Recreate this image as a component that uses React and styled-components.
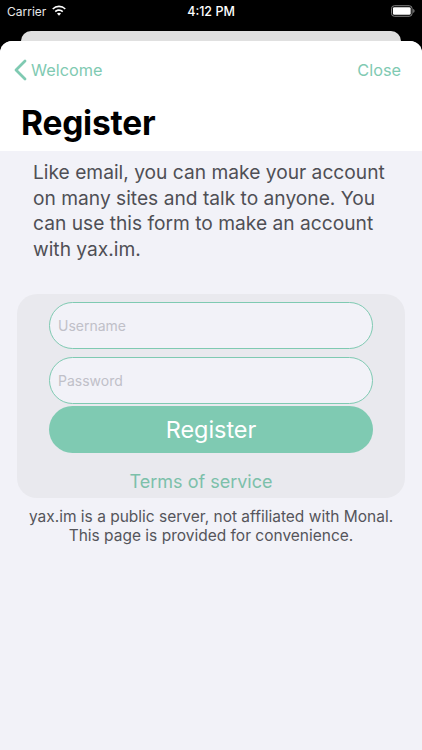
import React from 'react'
import styled, { createGlobalStyle } from 'styled-components'

const FONT = 'Inter, "Liberation Sans", sans-serif'
const MINT = '#7fcab2'

const GlobalStyle = createGlobalStyle`
    html, body {
        margin: 0;
        padding: 0;
        background: #000;
    }
    * {
        box-sizing: border-box;
    }
`

function WifiIcon() {
    return (
        <svg width="16" height="12" viewBox="0 0 16 12" fill="#fff">
            <path d="M8 2.3c2.2 0 4.2.8 5.7 2.3l1.1-1.2A9.9 9.9 0 0 0 8 .6 9.9 9.9 0 0 0 1.2 3.4l1.1 1.2A8.2 8.2 0 0 1 8 2.3z" />
            <path d="M8 5.9c1.2 0 2.3.4 3.2 1.3l1.1-1.2A6.3 6.3 0 0 0 8 4.2C6.4 4.2 4.900 4.800 3.700 6l1.100 1.200C5.700 6.300 6.800 5.900 8 5.900z" />
            <path d="M8 7.800c-.8 0-1.500.3-2 .8L8 10.800l2-2.200c-.5-.5-1.200-.8-2-.8z" />
        </svg>
    )
}

function BatteryIcon() {
    return (
        <svg width="24" height="12" viewBox="0 0 25 12">
            <rect x="0.5" y="0.5" width="21.500" height="11" rx="3" fill="none" stroke="#8a8a8a" />
            <rect x="2" y="2" width="18.500" height="8" rx="1.500" fill="#fff" />
            <path d="M23.200 4v4c.8-.3 1.300-1.100 1.300-2s-.5-1.700-1.300-2z" fill="#8a8a8a" />
        </svg>
    )
}

function App() {
    return (
        <Screen>
            <GlobalStyle />
            <StatusBar>
                <StatusLeft>Carrier <WifiIcon /></StatusLeft>
                <StatusTime>4:12 PM</StatusTime>
                <StatusRight><BatteryIcon /></StatusRight>
            </StatusBar>
            <BackSheet />
            <Sheet>
                <Header>
                    <NavBar>
                        <NavButton>
                            <svg width="14" height="22" viewBox="0 0 14 22" fill="none">
                                <path d="M12 2 3 11l9 9" stroke={MINT} strokeWidth="2.800" strokeLinecap="round" strokeLinejoin="round" />
                            </svg>
                            Welcome
                        </NavButton>
                        <NavButton>Close</NavButton>
                    </NavBar>
                    <Title>Register</Title>
                </Header>
                <Body>
                    <Intro>Like email, you can make your account on many sites and talk to anyone. You can use this form to make an account with yax.im.</Intro>
                    <FormCard>
                        <Field>Username</Field>
                        <Field>Password</Field>
                        <SubmitButton>Register</SubmitButton>
                        <TermsLink>Terms of service</TermsLink>
                    </FormCard>
                    <Note>yax.im is a public server, not affiliated with Monal.<br />This page is provided for convenience.</Note>
                </Body>
            </Sheet>
        </Screen>
    )
}

export default App

const Screen = styled.div`
    width: 422px;
    height: 750px;
    display: flex;
    flex-direction: column;
    overflow: hidden;
    background: #000;
    font-family: ${FONT};
`
const StatusBar = styled.div`
    height: 31px;
    flex-shrink: 0;
    display: grid;
    grid-template-columns: 1fr auto 1fr;
    align-items: center;
    padding: 0 7px 9px 7px;
    color: #fff;
    font-size: 12px;
`
const StatusLeft = styled.div`
    display: flex;
    align-items: center;
    gap: 5px;
    color: #e8e8e8;
`
const StatusTime = styled.div`
    font-weight: 500;
    font-size: 12.500px;
`
const StatusRight = styled.div`
    display: flex;
    justify-content: flex-end;
`
const BackSheet = styled.div`
    height: 10px;
    flex-shrink: 0;
    margin: 0 21px;
    background: #e0e0e0;
    border-radius: 10px 10px 0 0;
`
const Sheet = styled.div`
    flex: 1;
    display: flex;
    flex-direction: column;
    background: #f2f2f8;
    border-radius: 12px 12px 0 0;
    overflow: hidden;
`
const Header = styled.div`
    height: 110px;
    flex-shrink: 0;
    background: #fff;
    padding: 0 21px 0 13px;
`
const NavBar = styled.div`
    height: 58px;
    display: flex;
    justify-content: space-between;
    align-items: center;
`
const NavButton = styled.div`
    display: flex;
    align-items: center;
    gap: 4px;
    color: ${MINT};
    font-size: 16.300px;
`
const Title = styled.h1`
    margin: 0;
    padding-left: 8px;
    color: #000;
    font-size: 33.500px;
    line-height: 48px;
    font-weight: 700;
    letter-spacing: -0.200px;
`
const Body = styled.div`
    display: flex;
    flex-direction: column;
`
const Intro = styled.p`
    margin: 9px 0 0 0;
    padding: 0 30px 0 33px;
    color: #4f4f55;
    font-size: 19.200px;
    line-height: 25.500px;
`
const FormCard = styled.div`
    margin: 32px 17px 0 17px;
    height: 204px;
    display: flex;
    flex-direction: column;
    align-items: center;
    padding-top: 8px;
    background: #e9e9ee;
    border-radius: 20px;
`
const Field = styled.div`
    width: 324px;
    height: 47px;
    margin-bottom: 8px;
    display: flex;
    align-items: center;
    padding: 0 0 1px 8px;
    color: #c0c0c8;
    font-size: 14px;
    background: #f2f2f8;
    border: 1.300px solid ${MINT};
    border-radius: 24px;
`
const SubmitButton = styled.div`
    width: 324px;
    height: 47px;
    margin-top: -6px;
    display: flex;
    align-items: center;
    justify-content: center;
    color: #fff;
    font-size: 23.400px;
    background: ${MINT};
    border-radius: 24px;
`
const TermsLink = styled.div`
    margin: 17px 20px 0 0;
    color: #7cc0aa;
    font-size: 18px;
    line-height: 24px;
`
const Note = styled.p`
    margin: 9px 0 0 0;
    text-align: center;
    color: #55555b;
    font-size: 15.500px;
    line-height: 19px;
`
